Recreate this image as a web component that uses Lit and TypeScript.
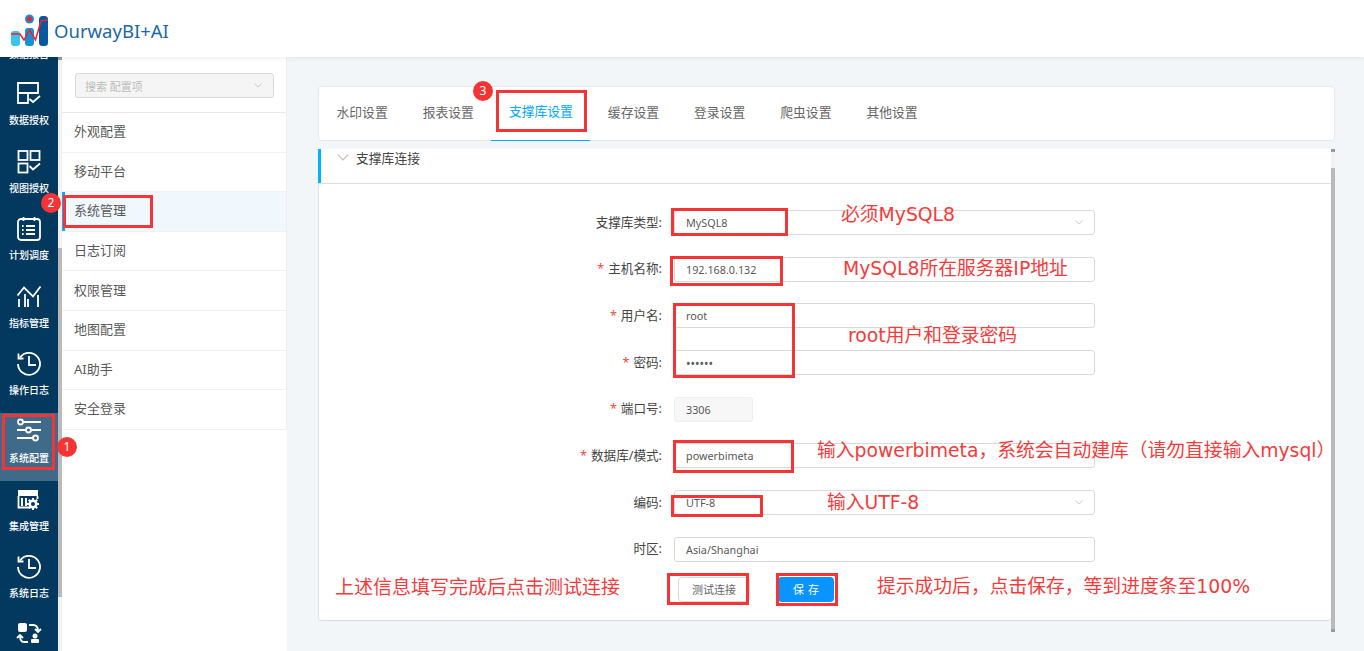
import { LitElement, html, css, svg } from "lit";
import { customElement } from "lit/decorators.js";

const hist = svg`<path d="M3 5.500A11 11 0 1 1 1 12"/><path d="M1.500 1.500v5h5"/><path d="M12 4v9h7"/>`;
const navItems = [
  { label: "数据报告", icon: svg`` },
  { label: "数据授权", icon: svg`<path d="M1 1h20v10H1zM1 11v10h10V11"/><path d="M12.500 17l3.500 3 7-6"/>` },
  { label: "视图授权", icon: svg`<rect x="1.500" y="1" width="9" height="9"/><rect x="13.500" y="1" width="9" height="9"/><rect x="1.500" y="13.500" width="9" height="9"/><path d="M12.500 16l3.500 3.500 7-6"/>` },
  { label: "计划调度", icon: svg`<rect x="1" y="2" width="22" height="21" rx="3"/><path d="M6.500 0v4M17.500 0v4M9 9h9M9 13h9M9 17h9M5 9h1.600M5 13h1.600M5 17h1.600"/>` },
  { label: "指标管理", icon: svg`<path d="M.5 10.500 7 2.500l9 9 7.500-10"/><path d="M2 14v8M8 9v13M11 14v8M21 10v12"/>` },
  { label: "操作日志", icon: hist },
  { label: "系统配置", active: true, icon: svg`<circle cx="3.500" cy="2" r="2.500"/><path d="M6 2h18M0 10h9M14 10h10M0 18h16"/><circle cx="11.500" cy="10" r="2.500"/><circle cx="18.500" cy="18" r="2.500"/>` },
  { label: "集成管理", icon: svg`<path d="M1.500 8v11.500h12M20.500 8v3"/><rect class="fill" x="1" y="2" width="20" height="6"/><rect class="fill" x="4" y="10" width="2" height="8"/><rect class="fill" x="8" y="10" width="2" height="8"/><circle class="fill" cx="16" cy="16" r="4.500"/><path class="thick" d="M16 10v12M10 16h12M11.800 11.800l8.400 8.400M11.800 20.200l8.400-8.400"/><circle class="hole" cx="16" cy="16" r="2"/>` },
  { label: "系统日志", icon: hist },
  { label: "", icon: svg`<rect class="fill" x="1" y="0" width="9" height="9" rx="2"/><path d="M12 2h4c3 0 5 2 5 6M18 6l3 3 3-3M11 19H7c-2.500 0-4-2-4-6M0 15l3-3 3 3"/><circle class="fill" cx="18" cy="13" r="2.500"/><rect class="fill" x="14" y="16" width="8" height="4" rx="1"/>` },
];
const subItems = ["外观配置", "移动平台", "系统管理", "日志订阅", "权限管理", "地图配置", "AI助手", "安全登录"];
const tabs = ["水印设置", "报表设置", "支撑库设置", "缓存设置", "登录设置", "爬虫设置", "其他设置"];
const rows = [
  { label: "支撑库类型", value: "MySQL8", select: true },
  { label: "主机名称", value: "192.168.0.132", req: true },
  { label: "用户名", value: "root", req: true },
  { label: "密码", value: "••••••", req: true, pw: true },
  { label: "端口号", value: "3306", req: true, port: true },
  { label: "数据库/模式", value: "powerbimeta", req: true },
  { label: "编码", value: "UTF-8", select: true },
  { label: "时区", value: "Asia/Shanghai" },
];
const boxes = [
  [2, 414, 53, 56], [63, 195, 90, 33], [496, 90, 91, 42], [671, 208, 117, 28],
  [670, 256, 113, 30], [673, 303, 122, 75], [673, 440, 121, 33], [671, 495, 92, 22],
  [667, 573, 82, 32], [776, 573, 62, 33],
];
const notes: [string, number, number, number][] = [
  ["必须MySQL8", 841, 215, 18.8], ["MySQL8所在服务器IP地址", 843, 269, 18.8],
  ["root用户和登录密码", 848, 336, 18.8], ["输入powerbimeta，系统会自动建库（请勿直接输入mysql）", 817, 451, 18.8],
  ["输入UTF-8", 827, 503, 18.8], ["上述信息填写完成后点击测试连接", 335, 587, 19],
  ["提示成功后，点击保存，等到进度条至100%", 877, 587, 18.8],
];
const badges: [string, number, number][] = [["1", 67, 447], ["2", 51, 203], ["3", 483, 91]];
const chevron = html`<svg class="chev" viewBox="0 0 10 6"><path d="M.5.5 5 5 9.500.5"/></svg>`;

@customElement("app-root")
export class AppRoot extends LitElement {
  static styles = css`
    :host { display: block; width: 1364px; height: 651px; position: relative; overflow: hidden;
      font-family: "Noto Sans", "Noto Sans CJK SC", sans-serif; background: #f3f6f9; }
    .header { height: 57px; background: #fff; display: flex; align-items: center; padding-left: 10px; gap: 6px;
      box-sizing: border-box; box-shadow: 0 1px 5px rgba(0,0,0,.08); position: relative; z-index: 2; }
    .logo { width: 38px; height: 34px; margin-top: 2px; }
    .brand { font-size: 18.500px; color: #1c68aa; line-height: 1; margin-top: 6px; }
    .body { display: flex; height: 594px; }
    .nav { width: 58px; background: #03395f; overflow: hidden; flex: none; color: #fff; }
    .nav-in { margin-top: -49.600px; }
    .nav-item { height: 67.600px; display: flex; flex-direction: column; align-items: center; padding-top: 7px;
      box-sizing: border-box; font-size: 10px; line-height: 14px; font-weight: 500; }
    .nav-item:first-child span { margin-top: 2px; }
    .nav-item.active { background: #406a8a; }
    .nav-item svg { width: 24px; height: 24px; flex: none; margin-bottom: 7px; fill: none; stroke: #fff; stroke-width: 1.800; overflow: visible; }
    .nav-item svg .fill { fill: #fff; stroke: none; }
    .nav-item svg .thick { stroke-width: 2; }
    .nav-item svg .hole { fill: #03395f; stroke: none; }
    .bar { width: 4px; background: #f1f1f1; position: relative; flex: none; }
    .bar i { position: absolute; display: block; left: 0; right: 0; background: #b9b9b9; }
    .bar b { position: absolute; display: block; left: 0; right: 0; height: 3px; background: #9a9a9a; top: 0; }
    .bar b.end { top: auto; bottom: 0; }
    .sub { width: 225px; background: #fff; flex: none; }
    .sub-head { height: 56px; padding: 16px 12px 0 13px; box-sizing: border-box; border-bottom: 1px solid #e6e8eb; border-right: 1px solid #eceef0; }
    .search { height: 25px; border: 1px solid #d9d9d9; border-radius: 3px; background: #f5f5f5; color: #bdbdbd; font-size: 11px;
      display: flex; align-items: center; justify-content: space-between; padding: 0 11px 0 9px; box-sizing: border-box; }
    .chev { width: 8px; height: 5px; fill: none; stroke: #bfbfbf; stroke-width: 1; }
    .sub-item { height: 39.600px; box-sizing: border-box; padding: 0 0 3px 12px; display: flex; align-items: center; font-size: 13px; color: #595959;
      border-bottom: 1px solid #eef0f2; border-right: 1px solid #eceef0; }
    .sub-item.active { background: #f0f7fd; box-shadow: inset 3px 0 0 #00aeff; }
    .main { flex: 1; padding: 29px 29px 0 31px; min-width: 0; }
    .tabs { height: 55px; background: #fff; border: 1px solid #e6e8eb; border-radius: 4px; box-sizing: border-box; display: flex; margin-bottom: 8px; }
    .tab { padding: 0 17.500px 6px; font-size: 12.800px; color: #666; display: flex; align-items: center; height: 54px; box-sizing: border-box; }
    .tab.active { color: #00aaff; border-bottom: 1px solid #00aaff; }
    .wrap { display: flex; height: 483px; }
    .panel { flex: 1; height: 472px; background: #fff; border-left: 1px solid #dfe2e5; border-bottom: 1px solid #d8dbde; box-sizing: border-box; border-radius: 0 0 4px 4px; }
    .p-head { height: 35px; border-bottom: 1px solid #dcdfe2; box-shadow: inset 3px 0 0 #00b4ff; margin-left: -1px; display: flex; gap: 7px; padding: 1px 0 0 19px; box-sizing: border-box;
      font-size: 12.800px; line-height: 16px; color: #444; }
    .p-head .chev { width: 12px; height: 7px; margin-top: 4px; }
    .form { padding-top: 26px; display: flex; flex-direction: column; gap: 21.700px; }
    .row { display: flex; height: 25px; align-items: center; }
    .lab { width: 343px; text-align: right; font-size: 12.600px; color: #444; flex: none; margin-right: 12px; padding-bottom: 3px; box-sizing: border-box; }
    .lab em { color: #f5483b; font-style: normal; margin-right: 4px; }
    .inp { width: 421px; height: 25px; box-sizing: border-box; border: 1px solid #d9d9d9; border-radius: 3px; font-size: 10.800px; color: #595959;
      display: flex; align-items: center; justify-content: space-between; padding: 0 11px; }
    .inp.port { width: 79px; background: #f7f7f7; border-color: #eee; }
    .inp.pw { font-size: 12px; padding-top: 1px; }
    .btns { display: flex; padding-left: 359px; gap: 28px; margin-top: 15px; }
    .btn { height: 25px; box-sizing: border-box; border-radius: 4px; font-size: 11px; display: flex; align-items: center; justify-content: center; }
    .btn.test { width: 72px; border: 1px solid #d9d9d9; color: #666; }
    .btn.save { width: 56px; background: #0a94ff; color: #fff; letter-spacing: 4px; text-indent: 4px; }
    .box { position: absolute; border: 3px solid #f53535; box-sizing: border-box; pointer-events: none; z-index: 5; }
    .note { position: absolute; color: #f53c3c; white-space: nowrap; z-index: 5; line-height: 1; transform: translateY(-50%);
      font-family: "DejaVu Sans", "Noto Sans CJK SC", sans-serif; }
    .badge { position: absolute; width: 20px; height: 20px; margin: -10px 0 0 -10px; border-radius: 50%; background: #f53535; color: #fff;
      font-size: 12px; line-height: 20px; text-align: center; z-index: 6; }
  `;

  render() {
    return html`
      <div class="header">
        <svg class="logo" viewBox="0 0 38 34">
          <rect x="1" y="18" width="9" height="15" rx="3" fill="#3cc4ee"/>
          <rect x="15" y="15" width="9" height="18" rx="3" fill="#1592d6"/>
          <rect x="29" y="3" width="9" height="30" rx="3.500" fill="#07589f"/>
          <circle cx="19.500" cy="6" r="4.500" fill="#1592d6"/><circle cx="19.500" cy="6" r="2.500" fill="#f21f2f"/>
          <path d="M1 21h9l4 6 5.500-10 6 10 5.500-19 7-1" fill="none" stroke="#ee2233" stroke-width="1.500"/>
        </svg>
        <span class="brand">OurwayBI+AI</span>
      </div>
      <div class="body">
        <div class="nav"><div class="nav-in">
          ${navItems.map((n) => html`<div class="nav-item ${n.active ? "active" : ""}"><svg viewBox="0 0 24 24">${n.icon}</svg>${n.label ? html`<span>${n.label}</span>` : ""}</div>`)}
        </div></div>
        <div class="bar"><b></b><i style="top:191px;height:349px"></i></div>
        <div class="sub">
          <div class="sub-head"><div class="search"><span>搜索 配置项</span>${chevron}</div></div>
          ${subItems.map((s, i) => html`<div class="sub-item ${i === 2 ? "active" : ""}">${s}</div>`)}
        </div>
        <div class="main">
          <div class="tabs">${tabs.map((t, i) => html`<div class="tab ${i === 2 ? "active" : ""}">${t}</div>`)}</div>
          <div class="wrap">
            <div class="panel">
              <div class="p-head">${chevron}<span>支撑库连接</span></div>
              <div class="form">
                ${rows.map((r) => html`<div class="row">
                  <div class="lab">${r.req ? html`<em>*</em>` : ""}${r.label}:</div>
                  <div class="inp ${r.port ? "port" : ""} ${r.pw ? "pw" : ""}"><span>${r.value}</span>${r.select ? chevron : ""}</div>
                </div>`)}
              </div>
              <div class="btns"><div class="btn test">测试连接</div><div class="btn save">保存</div></div>
            </div>
            <div class="bar"><b></b><i style="top:19px;bottom:0"></i><b class="end"></b></div>
          </div>
        </div>
      </div>
      ${boxes.map(([x, y, w, h]) => html`<div class="box" style="left:${x}px;top:${y}px;width:${w}px;height:${h}px"></div>`)}
      ${notes.map(([t, x, y, s]) => html`<div class="note" style="left:${x}px;top:${y}px;font-size:${s}px">${t}</div>`)}
      ${badges.map(([t, x, y]) => html`<div class="badge" style="left:${x}px;top:${y}px">${t}</div>`)}
    `;
  }
}
